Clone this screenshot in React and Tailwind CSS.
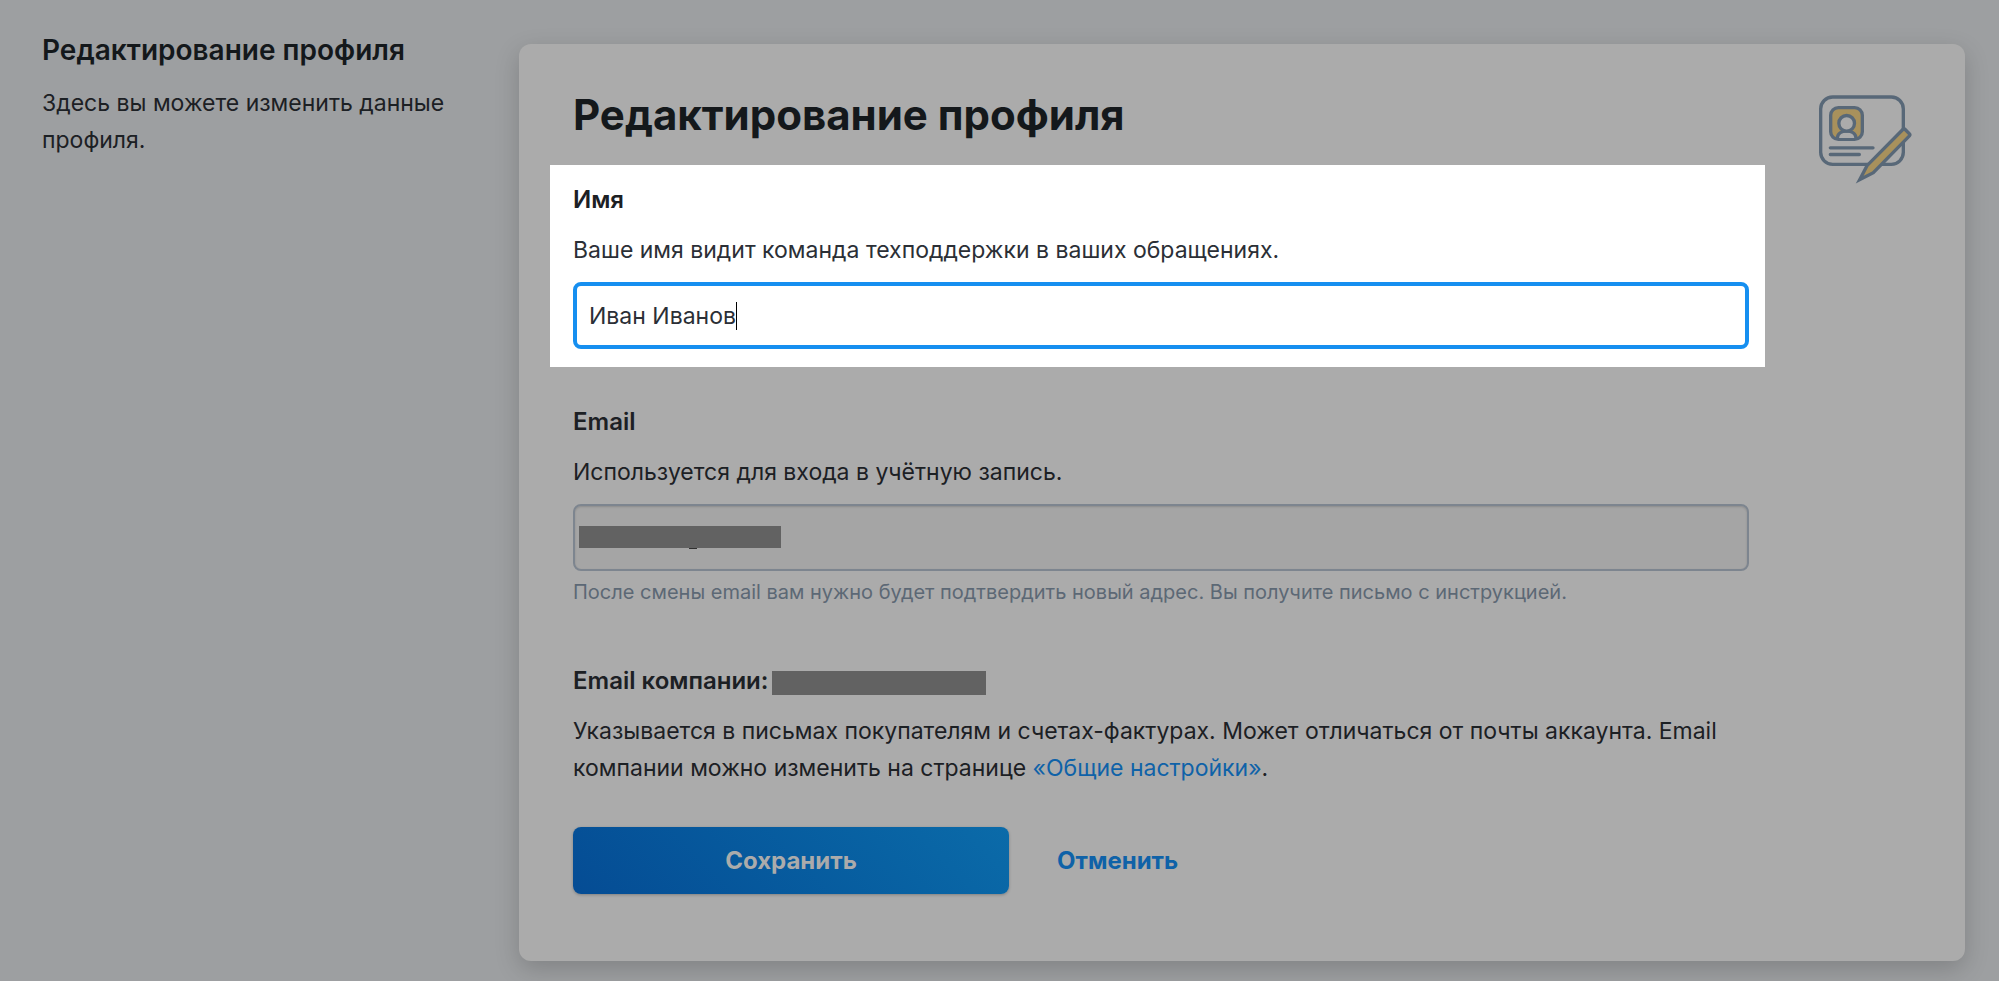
import React, { useState } from 'react';

const ProfileIcon = () => (
    <svg
        viewBox="112 99 288 276"
        className="w-24 h-[92px]"
        fill="none"
        stroke="#586878"
        strokeWidth="10"
        strokeLinecap="round"
        strokeLinejoin="round"
        aria-hidden="true"
    >
        {/* Card */}
        <rect x="123" y="111" width="248" height="202" rx="36" />

        {/* Photo */}
        <rect x="153" y="143" width="95" height="95" rx="23" fill="#a8915c" />
        <path d="M173 234c1-13 13-21 28-21s27 8 28 21z" fill="#ababab" stroke="none" />
        <path d="M173 234c1-13 13-21 28-21s27 8 28 21" />
        <circle cx="201" cy="190" r="23.500" fill="#ababab" />

        {/* Lines */}
        <path d="M152 263.500h128M152 283.500h87" />

        {/* Pencil */}
        <path
            d="M240 359l22-42L371 207q2-2 4 0l15 15q2 3 0 5L281 338z"
            fill="#a8915c"
            strokeLinejoin="miter"
        />
    </svg>
);

const Label = ({ htmlFor, children }) => (
    <label htmlFor={htmlFor} className="block text-2xl/[37px] font-semibold">
        {children}
    </label>
);

export default function App() {
    const [name, setName] = useState('Иван Иванов');
    const [email, setEmail] = useState('');

    return (
        <div className="min-h-screen flex items-start bg-[#9d9fa1] pl-[42px] pr-[34px] pb-5 font-['Inter','Noto_Sans',sans-serif] text-[23px]/[37px] text-[#1c2024]">
            <aside className="w-[477px] shrink-0 pt-8 pr-14">
                <h2 className="text-[28px]/[37px] font-semibold text-[#14181b]">Редактирование профиля</h2>
                <p className="mt-4">Здесь вы можете изменить данные профиля.</p>
            </aside>

            <main className="flex-1 min-w-0 flex mt-11 pt-[43px] pb-[67px] pl-[31px] rounded-xl bg-[#ababab] shadow-[0_8px_24px_rgba(0,0,0,0.18)]">
                <form className="flex-1 min-w-0" onSubmit={(e) => e.preventDefault()}>
                    <h1 className="pl-[23px] mb-[22px] text-[42px]/[56px] font-bold text-[#14181b]">
                        Редактирование профиля
                    </h1>

                    {/* Name */}
                    <section className="pt-4 pb-[18px] pl-[23px] pr-4 bg-white">
                        <Label htmlFor="name">Имя</Label>
                        <p className="mt-3.5 text-[#2b2f36]">
                            Ваше имя видит команда техподдержки в ваших обращениях.
                        </p>
                        <div className="relative mt-[13px]">
                            <input
                                id="name"
                                type="text"
                                value={name}
                                onChange={(e) => setName(e.target.value)}
                                className="block w-full h-[67px] px-3 rounded-lg border-4 border-[#168ff0] bg-white text-[#2b2f36] outline-none"
                            />
                            <span className="absolute left-[163px] top-5 w-px h-7 bg-black" />
                        </div>
                    </section>

                    {/* Email */}
                    <section className="mt-9 pl-[23px] pr-4">
                        <Label htmlFor="email">Email</Label>
                        <p className="mt-3.5">Используется для входа в учётную запись.</p>
                        <div className="relative mt-[13px]">
                            <input
                                id="email"
                                type="email"
                                value={email}
                                onChange={(e) => setEmail(e.target.value)}
                                className="block w-full h-[67px] px-3 rounded-lg border-2 border-[#7d858f] bg-[#a5a5a5] shadow-[inset_0_1px_2px_rgba(0,0,0,0.15)] outline-none"
                            />
                            <span className="absolute left-1.5 top-[22px] w-[202px] h-[22px] bg-[#626262]">
                                <span className="absolute left-[110px] top-full w-2 h-px bg-[#303030]" />
                            </span>
                        </div>
                        <p className="mt-[7px] text-xl/7 text-[#5c6875]">
                            После смены email вам нужно будет подтвердить новый адрес. Вы получите письмо с инструкцией.
                        </p>
                    </section>

                    {/* Company email */}
                    <section className="mt-14 pl-[23px] pr-4">
                        <div className="flex items-center gap-1 text-2xl/[37px] font-semibold">
                            <h3>Email компании:</h3>
                            <span className="w-[214px] h-6 mt-1 bg-[#626262]" />
                        </div>
                        <p className="mt-3.5">
                            Указывается в письмах покупателям и счетах-фактурах. Может отличаться от почты аккаунта. Email
                            компании можно изменить на странице{' '}
                            <a href="#settings" className="text-[#0f62a8]">«Общие настройки»</a>.
                        </p>
                    </section>

                    {/* Actions */}
                    <div className="flex items-center mt-10 pl-[23px] text-2xl/[37px] font-bold">
                        <button
                            type="submit"
                            className="w-[436px] h-[67px] rounded-lg bg-linear-45 from-[#054c94] to-[#0b6ba9] text-[#ababab] shadow-[0_1px_3px_rgba(0,0,0,0.25)]"
                        >
                            Сохранить
                        </button>
                        <button type="button" className="ml-12 text-[#0f62a8]">Отменить</button>
                    </div>
                </form>

                <div className="w-[200px] shrink-0 pl-[52px] pt-1.5">
                    <ProfileIcon />
                </div>
            </main>
        </div>
    );
}
